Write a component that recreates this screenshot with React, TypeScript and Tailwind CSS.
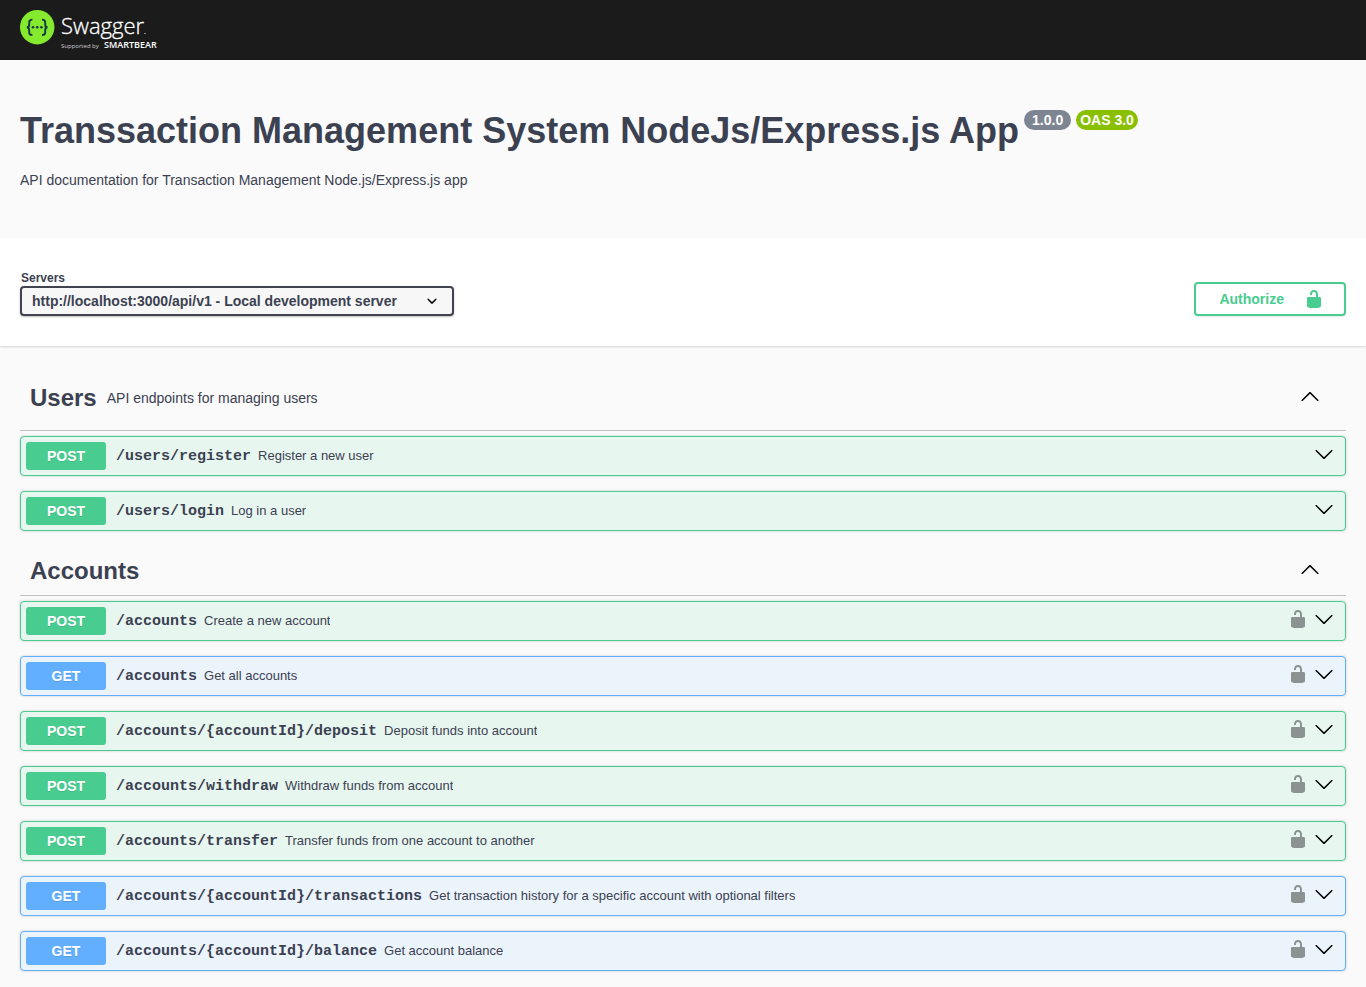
import React from "react";

type Method = "POST" | "GET";

interface Operation {
  method: Method;
  path: string;
  summary: string;
  secured: boolean;
}

interface Tag {
  name: string;
  description?: string;
  operations: Operation[];
}

const tags: Tag[] = [
  {
    name: "Users",
    description: "API endpoints for managing users",
    operations: [
      { method: "POST", path: "/users/register", summary: "Register a new user", secured: false },
      { method: "POST", path: "/users/login", summary: "Log in a user", secured: false },
    ],
  },
  {
    name: "Accounts",
    operations: [
      { method: "POST", path: "/accounts", summary: "Create a new account", secured: true },
      { method: "GET", path: "/accounts", summary: "Get all accounts", secured: true },
      { method: "POST", path: "/accounts/{accountId}/deposit", summary: "Deposit funds into account", secured: true },
      { method: "POST", path: "/accounts/withdraw", summary: "Withdraw funds from account", secured: true },
      { method: "POST", path: "/accounts/transfer", summary: "Transfer funds from one account to another", secured: true },
      {
        method: "GET",
        path: "/accounts/{accountId}/transactions",
        summary: "Get transaction history for a specific account with optional filters",
        secured: true,
      },
      { method: "GET", path: "/accounts/{accountId}/balance", summary: "Get account balance", secured: true },
    ],
  },
];

const rowStyles: Record<Method, string> = {
  POST: "border-[#49cc90] bg-[#e8f6f0]",
  GET: "border-[#61affe] bg-[#ebf3fb]",
};

const badgeStyles: Record<Method, string> = {
  POST: "bg-[#49cc90]",
  GET: "bg-[#61affe]",
};

function Icon({ d, className }: { d: string; className?: string }) {
  return (
    <svg viewBox="0 0 20 20" width="20" height="20" fill="currentColor" aria-hidden="true" className={className}>
      <path d={d} />
    </svg>
  );
}

const ARROW_DOWN =
  "M17.418 6.109c.272-.268.709-.268.979 0s.271.701 0 .969l-7.908 7.83c-.27.268-.707.268-.979 0l-7.908-7.83c-.27-.268-.27-.701 0-.969s.709-.268.979 0L10 13.25z";
const ARROW_UP =
  "M17.418 14.908c.272.268.709.268.979 0s.271-.701 0-.969l-7.908-7.83c-.27-.268-.707-.268-.979 0l-7.908 7.83c-.27.268-.27.701 0 .969s.709.268.979 0L10 7.767z";
const UNLOCKED =
  "M15.8 8H14V5.6C14 2.703 12.665 1 10 1 7.334 1 6 2.703 6 5.6V6h2v-.801C8 3.754 8.797 3 10 3c1.203 0 2 .754 2 2.199V8H4c-.553 0-1 .646-1 1.199V17c0 .549.428 1.139.951 1.307l1.197.387C5.672 18.861 6.55 19 7.1 19h5.8c.549 0 1.428-.139 1.951-.307l1.196-.387c.524-.167.953-.757.953-1.306V9.199C17 8.646 16.352 8 15.8 8z";
const SELECT_ARROW =
  "M13.418 7.859a.695.695 0 01.978 0 .68.68 0 010 .969l-3.908 3.83a.697.697 0 01-.979 0l-3.908-3.83a.68.68 0 010-.969.695.695 0 01.978 0L10 11l3.418-3.141z";

function Logo() {
  return (
    <a href="#top" aria-label="Swagger" className="block">
      <svg width="150" height="40" viewBox="0 0 150 40" aria-hidden="true">
        <circle cx="17.2" cy="17.2" r="17.2" fill="#85ea2d" />
        <g fill="none" stroke="#173647" strokeWidth="1.9">
          <path d="M12.4 9.6c-2.6 0-3.2.8-3.2 2.6v2.2c0 1.9-.6 2.9-2.4 2.9 1.8 0 2.4 1 2.4 2.9v2.2c0 1.8.6 2.6 3.2 2.6" />
          <path d="M22 9.6c2.6 0 3.2.8 3.2 2.6v2.2c0 1.9.6 2.9 2.4 2.9-1.8 0-2.4 1-2.4 2.9v2.2c0 1.8-.6 2.6-3.2 2.6" />
        </g>
        <g fill="#173647">
          <circle cx="13" cy="17.3" r="1.3" />
          <circle cx="17.2" cy="17.3" r="1.3" />
          <circle cx="21.4" cy="17.3" r="1.3" />
        </g>
        <text
          x="41"
          y="24"
          fontFamily="'Open Sans', sans-serif"
          fontSize="22"
          fontWeight="300"
          fill="#ffffff"
          stroke="#ffffff"
          strokeWidth="0.3"
        >
          Swagger
        </text>
        <rect x="124" y="23" width="2" height="1" fill="#8a8a8a" />
        <text x="41" y="38" fontFamily="'Open Sans', sans-serif" fontSize="6" fill="#d0d0d0">
          Supported by
        </text>
        <text x="84" y="38" fontFamily="'Open Sans', sans-serif" fontSize="9" fontWeight="600" fill="#ffffff">
          SMARTBEAR
        </text>
      </svg>
    </a>
  );
}

function OperationRow({ method, path, summary, secured }: Operation) {
  return (
    <li
      className={`flex h-10 items-center rounded border pr-[11px] pl-[5px] shadow-[0_0_3px_rgba(0,0,0,0.19)] ${rowStyles[method]}`}
    >
      <button type="button" className="flex min-w-0 flex-1 items-center text-left">
        <span
          className={`w-20 shrink-0 rounded-[3px] text-center text-sm leading-7 font-bold text-white [text-shadow:0_1px_0_rgba(0,0,0,0.1)] ${badgeStyles[method]}`}
        >
          {method}
        </span>
        <span className="pt-0.5 pl-2.5 font-['Liberation_Mono',monospace] text-[15px] leading-5 font-bold whitespace-nowrap">
          {path}
        </span>
        <span className="truncate pl-[7px] text-[13px] leading-5">{summary}</span>
      </button>
      <div className="flex items-center gap-1.5 pb-1">
        {secured && (
          <button type="button" aria-label="Authorization button unlocked" className="text-[#8b9392]">
            <Icon d={UNLOCKED} />
          </button>
        )}
        <button type="button" aria-label={`Expand ${method} ${path}`} className="text-black">
          <Icon d={ARROW_DOWN} />
        </button>
      </div>
    </li>
  );
}

function TagSection({ name, description, operations }: Tag) {
  return (
    <section>
      <div
        className={`flex items-center border-b border-[#bfc0c3] pr-[26px] pl-2.5 ${description ? "h-[66px]" : "h-[50px]"}`}
      >
        <h2 className="text-2xl leading-8 font-bold">{name}</h2>
        <p className="flex-1 pl-2.5 text-sm leading-5">{description}</p>
        <button type="button" aria-label={`Collapse ${name}`} className="pb-1 text-black">
          <Icon d={ARROW_UP} />
        </button>
      </div>
      <ul className="flex flex-col gap-[15px] pt-[5px]">
        {operations.map((operation) => (
          <OperationRow key={operation.method + operation.path} {...operation} />
        ))}
      </ul>
    </section>
  );
}

export default function App() {
  return (
    <div
      id="top"
      className="min-h-screen bg-[#fafafa] font-['Liberation_Sans',Arial,sans-serif] text-[#3b4151]"
    >
      <header className="bg-[#1b1b1b] px-5 py-2.5">
        <Logo />
      </header>

      <main>
        <div className="px-5 pt-[50px] pb-12">
          <div className="flex items-start gap-[5px]">
            <h1 className="text-4xl leading-[42px] font-bold">
              Transsaction Management System NodeJs/Express.js App
            </h1>
            <span className="rounded-full bg-[#7d8492] px-2 text-sm leading-5 font-bold text-white">1.0.0</span>
            <span className="rounded-full bg-[#89bf04] px-1 text-sm leading-5 font-bold whitespace-nowrap text-white">
              OAS 3.0
            </span>
          </div>
          <p className="pt-[18px] text-sm leading-5">API documentation for Transaction Management Node.js/Express.js app</p>
        </div>

        <div className="flex items-end justify-between bg-white px-5 pt-8 pb-[30px] shadow-[0_1px_2px_rgba(0,0,0,0.15)]">
          <div>
            <label htmlFor="servers" className="block pl-px text-xs leading-4 font-bold">
              Servers
            </label>
            <div className="relative">
              <select
                id="servers"
                className="block h-[30px] w-[434px] max-w-full appearance-none rounded border-2 border-[#41444e] bg-[#f7f7f7] pr-10 pl-2.5 text-sm leading-5 font-bold shadow-[0_1px_2px_rgba(0,0,0,0.25)]"
              >
                <option>http://localhost:3000/api/v1 - Local development server</option>
              </select>
              <Icon d={SELECT_ARROW} className="pointer-events-none absolute top-[5px] right-3 text-black" />
            </div>
          </div>
          <button
            type="button"
            className="flex h-[34px] items-center gap-5 rounded border-2 border-[#49cc90] pr-5 pl-[23px] text-sm leading-5 font-bold text-[#49cc90] shadow-[0_1px_2px_rgba(0,0,0,0.1)]"
          >
            Authorize
            <Icon d={UNLOCKED} />
          </button>
        </div>

        <div className="flex flex-col gap-[15px] px-5 pt-[19px] pb-3">
          {tags.map((tag) => (
            <TagSection key={tag.name} {...tag} />
          ))}
        </div>
      </main>
    </div>
  );
}
